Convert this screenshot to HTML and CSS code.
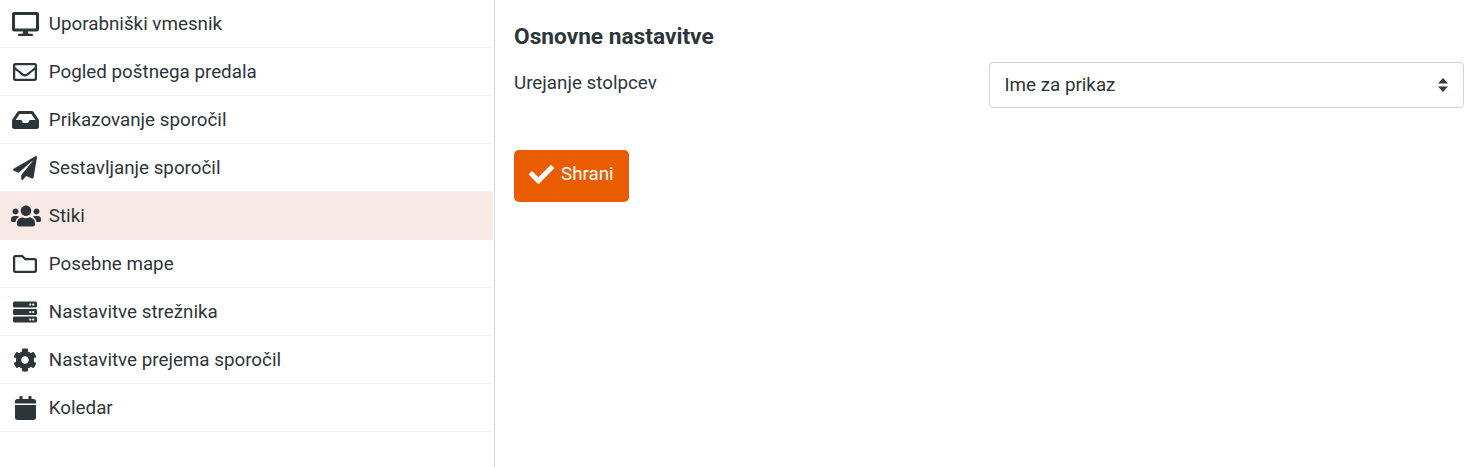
FILE: index.html
```html
<!DOCTYPE html>
<html lang="sl">
<head>
    <meta charset="UTF-8">
    <meta name="viewport" content="width=device-width, initial-scale=1.0">
    <title>Nastavitve</title>
    <link rel="stylesheet" href="styles.css">
</head>
<body>
    <div class="layout">
        <ul class="menu">
            <li class="menu-item">
                <span class="menu-icon"><svg viewBox="0 0 576 512"><path d="M528 0H48C21.5 0 0 21.5 0 48v320c0 26.5 21.5 48 48 48h192l-16 48h-72c-13.3 0-24 10.700-24 24s10.700 24 24 24h272c13.300 0 24-10.700 24-24s-10.700-24-24-24h-72l-16-48h192c26.500 0 48-21.500 48-48V48c0-26.500-21.500-48-48-48zm-16 352H64V64h448v288z"/></svg></span>
                Uporabniški vmesnik
            </li>
            <li class="menu-item">
                <span class="menu-icon"><svg viewBox="0 0 512 512"><path d="M464 64H48C21.490 64 0 85.490 0 112v288c0 26.510 21.490 48 48 48h416c26.510 0 48-21.490 48-48V112c0-26.510-21.490-48-48-48zm0 48v40.805c-22.422 18.259-58.168 46.651-134.587 106.490-16.841 13.247-50.201 45.072-73.413 44.701-23.208.375-56.579-31.459-73.413-44.701C106.180 199.465 70.425 171.067 48 152.805V112h416zM48 400V214.398c22.914 18.251 55.409 43.862 104.938 82.646 21.857 17.205 60.134 55.186 103.062 54.955 42.717.231 80.509-37.199 103.053-54.947 49.528-38.783 82.032-64.401 104.947-82.653V400H48z"/></svg></span>
                Pogled poštnega predala
            </li>
            <li class="menu-item">
                <span class="menu-icon"><svg viewBox="0 0 576 512"><path d="M567.938 243.908L462.250 85.374A48.003 48.003 0 0 0 422.311 64H153.689a48 48 0 0 0-39.938 21.374L8.062 243.908A47.994 47.994 0 0 0 0 270.533V400c0 26.510 21.490 48 48 48h480c26.510 0 48-21.490 48-48V270.533a47.994 47.994 0 0 0-8.062-26.625zM162.252 128h251.497l85.333 128H376l-32 64H232l-32-64H76.918l85.334-128z"/></svg></span>
                Prikazovanje sporočil
            </li>
            <li class="menu-item">
                <span class="menu-icon"><svg viewBox="0 0 512 512"><path d="M476 3.200L12.500 270.600c-18.100 10.400-15.800 35.600 2.200 43.200L121 358.400l287.300-253.200c5.500-4.900 13.300 2.600 8.600 8.300L176 407v80.500c0 23.600 28.500 32.900 42.500 15.800L282 426l124.600 52.200c14.200 6 30.400-2.900 33-18.200l72-432C515 7.800 493.300-6.800 476 3.200z"/></svg></span>
                Sestavljanje sporočil
            </li>
            <li class="menu-item active">
                <span class="menu-icon icon-wide"><svg viewBox="0 0 640 512"><path d="M96 224c35.300 0 64-28.700 64-64s-28.700-64-64-64-64 28.700-64 64 28.700 64 64 64zm448 0c35.300 0 64-28.700 64-64s-28.700-64-64-64-64 28.700-64 64 28.700 64 64 64zm32 32h-64c-17.600 0-33.500 7.100-45.100 18.600 40.300 22.100 68.900 62 75.100 109.400h66c17.700 0 32-14.300 32-32v-32c0-35.300-28.700-64-64-64zm-256 0c61.900 0 112-50.100 112-112S381.900 32 320 32 208 82.100 208 144s50.100 112 112 112zm76.800 32h-8.300c-20.800 10-43.900 16-68.500 16s-47.600-6-68.500-16h-8.300C179.600 288 128 339.600 128 403.200V432c0 26.500 21.500 48 48 48h288c26.500 0 48-21.500 48-48v-28.800c0-63.600-51.600-115.200-115.200-115.200zm-223.700-13.400C161.500 263.100 145.600 256 128 256H64c-35.300 0-64 28.700-64 64v32c0 17.700 14.300 32 32 32h65.900c6.300-47.400 34.900-87.300 75.200-109.400z"/></svg></span>
                Stiki
            </li>
            <li class="menu-item">
                <span class="menu-icon"><svg viewBox="0 0 512 512"><path d="M464 128H272l-54.630-54.630c-6-6-14.140-9.370-22.630-9.370H48C21.490 64 0 85.490 0 112v288c0 26.510 21.490 48 48 48h416c26.510 0 48-21.490 48-48V176c0-26.510-21.490-48-48-48zm0 272H48V112h140.120l54.630 54.630c6 6 14.140 9.370 22.630 9.370H464v224z"/></svg></span>
                Posebne mape
            </li>
            <li class="menu-item">
                <span class="menu-icon"><svg viewBox="0 0 512 512"><path d="M480 160H32c-17.673 0-32-14.327-32-32V64c0-17.673 14.327-32 32-32h448c17.673 0 32 14.327 32 32v64c0 17.673-14.327 32-32 32zm-48-88c-13.255 0-24 10.745-24 24s10.745 24 24 24 24-10.745 24-24-10.745-24-24-24zm-64 0c-13.255 0-24 10.745-24 24s10.745 24 24 24 24-10.745 24-24-10.745-24-24-24zm112 248H32c-17.673 0-32-14.327-32-32v-64c0-17.673 14.327-32 32-32h448c17.673 0 32 14.327 32 32v64c0 17.673-14.327 32-32 32zm-48-88c-13.255 0-24 10.745-24 24s10.745 24 24 24 24-10.745 24-24-10.745-24-24-24zm-64 0c-13.255 0-24 10.745-24 24s10.745 24 24 24 24-10.745 24-24-10.745-24-24-24zm112 248H32c-17.673 0-32-14.327-32-32v-64c0-17.673 14.327-32 32-32h448c17.673 0 32 14.327 32 32v64c0 17.673-14.327 32-32 32zm-48-88c-13.255 0-24 10.745-24 24s10.745 24 24 24 24-10.745 24-24-10.745-24-24-24zm-64 0c-13.255 0-24 10.745-24 24s10.745 24 24 24 24-10.745 24-24-10.745-24-24-24z"/></svg></span>
                Nastavitve strežnika
            </li>
            <li class="menu-item">
                <span class="menu-icon"><svg viewBox="0 0 512 512"><path d="M487.400 315.700l-42.600-24.600c4.300-23.200 4.300-47 0-70.200l42.600-24.600c4.900-2.800 7.100-8.600 5.500-14-11.100-35.600-30-67.800-54.700-94.600-3.800-4.100-10-5.100-14.800-2.300L380.800 110c-17.900-15.400-38.500-27.300-60.800-35.100V25.800c0-5.600-3.900-10.500-9.400-11.700-36.700-8.200-74.300-7.800-109.200 0-5.500 1.200-9.400 6.100-9.400 11.700V75c-22.200 7.900-42.800 19.800-60.800 35.100L88.700 85.500c-4.900-2.800-11-1.900-14.800 2.300-24.700 26.700-43.600 58.900-54.700 94.600-1.700 5.400.6 11.200 5.500 14L67.300 221c-4.300 23.200-4.300 47 0 70.200l-42.600 24.600c-4.900 2.800-7.100 8.600-5.500 14 11.100 35.600 30 67.800 54.700 94.600 3.800 4.100 10 5.100 14.800 2.300l42.600-24.600c17.900 15.400 38.500 27.300 60.800 35.100v49.200c0 5.600 3.900 10.500 9.400 11.700 36.700 8.200 74.300 7.800 109.200 0 5.500-1.200 9.400-6.100 9.400-11.700v-49.200c22.200-7.900 42.800-19.800 60.800-35.100l42.600 24.600c4.900 2.800 11 1.900 14.800-2.300 24.700-26.700 43.600-58.900 54.700-94.600 1.500-5.500-.7-11.300-5.600-14.100zM256 336c-44.100 0-80-35.900-80-80s35.900-80 80-80 80 35.900 80 80-35.900 80-80 80z"/></svg></span>
                Nastavitve prejema sporočil
            </li>
            <li class="menu-item">
                <span class="menu-icon"><svg viewBox="0 0 448 512"><path d="M12 192h424c6.600 0 12 5.400 12 12v260c0 26.500-21.500 48-48 48H48c-26.500 0-48-21.500-48-48V204c0-6.600 5.400-12 12-12zm436-44v-36c0-26.500-21.500-48-48-48h-48V12c0-6.600-5.400-12-12-12h-40c-6.600 0-12 5.400-12 12v52H160V12c0-6.600-5.400-12-12-12h-40c-6.600 0-12 5.400-12 12v52H48C21.500 64 0 85.500 0 112v36c0 6.600 5.400 12 12 12h424c6.600 0 12-5.400 12-12z"/></svg></span>
                Koledar
            </li>
        </ul>

        <div class="content">
            <h2 class="section-title">Osnovne nastavitve</h2>
            <div class="form-row">
                <label for="sort" class="form-label">Urejanje stolpcev</label>
                <select id="sort" class="form-select">
                    <option>Ime za prikaz</option>
                </select>
            </div>
            <button class="btn-save">
                <svg viewBox="0 0 512 512"><path d="M173.898 439.404l-166.400-166.400c-9.997-9.997-9.997-26.206 0-36.204l36.203-36.204c9.997-9.998 26.207-9.998 36.204 0L192 312.690 432.095 72.596c9.997-9.997 26.207-9.997 36.204 0l36.203 36.204c9.997 9.997 9.997 26.206 0 36.204l-294.400 294.401c-9.998 9.997-26.207 9.997-36.204-.001z"/></svg>
                Shrani
            </button>
        </div>
    </div>
</body>
</html>
```

FILE: styles.css
```css
html, body {
    height: 100%;
}
body {
    margin: 0;
    font-family: Roboto, sans-serif;
    font-size: 18.8px;
    color: #2c363a;
    background-color: #fff;
}
.layout {
    display: flex;
    height: 100%;
}
.menu {
    flex: 0 0 495px;
    box-sizing: border-box;
    margin: 0;
    padding: 0 1px 0 0;
    list-style: none;
    border-right: 1px solid #d4dbde;
}
.menu-item {
    display: flex;
    align-items: center;
    box-sizing: border-box;
    height: 48px;
    padding-left: 10.4px;
    border-bottom: 1px solid #f0f0f0;
}
.menu-item.active {
    background-color: #faeae6;
}
.menu-icon {
    display: flex;
    justify-content: center;
    width: 30px;
    margin-right: 8.4px;
}
.menu-icon svg {
    height: 24px;
    fill: #2c363a;
}
.icon-wide svg {
    transform: translateX(1px);
}
.content {
    flex: 1;
    padding: 25px 11px 0 19px;
}
.section-title {
    margin: 0 0 13px;
    font-size: 22.7px;
    line-height: 24px;
    font-weight: 700;
}
.form-row {
    display: flex;
    margin-bottom: 42px;
}
.form-label {
    flex: 0 0 475px;
    line-height: 42px;
}
.form-select {
    flex: 1;
    height: 46px;
    padding: 0 15px 1px 14.5px;
    border: 1px solid #cfd4da;
    border-radius: 4px;
    font-family: inherit;
    font-size: 18.8px;
    color: #2c363a;
    appearance: none;
    background: #fff url("data:image/svg+xml,%3Csvg xmlns='http://www.w3.org/2000/svg' width='10' height='14'%3E%3Cpath fill='%23343a40' d='M5 0l5 5.500H0zM5 14l-5-5.500h10z'/%3E%3C/svg%3E") no-repeat right 15.500px center;
}
.btn-save {
    display: flex;
    align-items: center;
    gap: 7px;
    width: 115px;
    height: 52px;
    padding: 0 0 4px 15px;
    border: none;
    border-radius: 5px;
    background-color: #e95d00;
    color: #fff;
    font-family: inherit;
    font-size: 18.8px;
    cursor: pointer;
}
.btn-save svg {
    width: 25px;
    height: 25px;
    fill: #fff;
}
```
